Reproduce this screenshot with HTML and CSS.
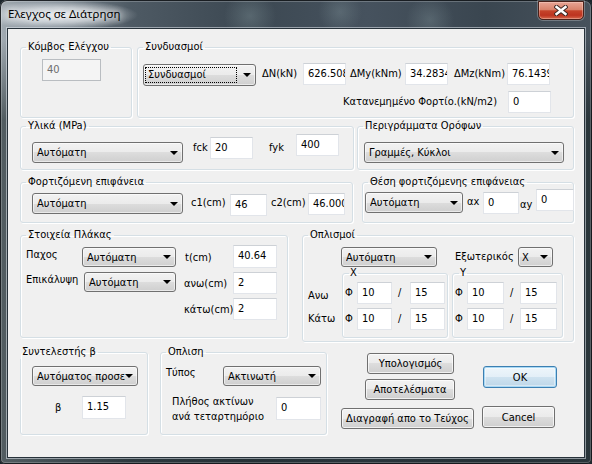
FILE: index.html
```html
<!DOCTYPE html>
<html lang="el">
<head>
<meta charset="utf-8">
<title>Ελεγχος σε Διάτρηση</title>
<link rel="stylesheet" href="styles.css">
</head>
<body>
<div class="window">
  <div class="titlebar">
    <span class="title">Ελεγχος σε Διάτρηση</span>
    <div class="close-btn">
      <svg width="14" height="11" viewBox="0 0 14 11">
        <path d="M2.5 2 L11.5 9 M11.5 2 L2.5 9" stroke="#3b2723" stroke-width="4.4" stroke-linecap="square" fill="none"/>
        <path d="M2.5 2 L11.5 9 M11.5 2 L2.5 9" stroke="#ffffff" stroke-width="2.4" stroke-linecap="square" fill="none"/>
      </svg>
    </div>
  </div>
  <div class="client">
    <div class="row r1">
      <fieldset class="grp g-node">
        <legend>Κόμβος Ελέγχου</legend>
        <div class="edit disabled node-edit">40</div>
      </fieldset>
      <fieldset class="grp g-comb">
        <legend>Συνδυασμοί</legend>
        <div class="line comb-a">
          <div class="combo comb-sel"><span class="focus-rect">Συνδυασμοί</span><i class="arrow"></i></div>
          <span class="lbl lh22 l-dn">ΔN(kN)</span>
          <div class="edit w43">626.508</div>
          <span class="lbl lh22 l-dmy">ΔMy(kNm)</span>
          <div class="edit w43">34.2834</div>
          <span class="lbl lh22 l-dmz">ΔMz(kNm)</span>
          <div class="edit w43">76.1439</div>
        </div>
        <div class="line comb-b">
          <span class="lbl lh22 l-load">Κατανεμημένο Φορτίο.(kN/m2)</span>
          <div class="edit w43">0</div>
        </div>
      </fieldset>
    </div>

    <div class="row r2">
      <fieldset class="grp g-mat">
        <legend>Υλικά (MPa)</legend>
        <div class="line mat-line">
          <div class="combo mat-sel"><span class="ctext">Αυτόματη</span><i class="arrow"></i></div>
          <span class="lbl l-fck">fck</span>
          <div class="edit w43">20</div>
          <span class="lbl l-fyk">fyk</span>
          <div class="edit w43 fyk-edit">400</div>
        </div>
      </fieldset>
      <fieldset class="grp g-outl">
        <legend>Περιγράμματα Ορόφων</legend>
        <div class="combo outl-sel"><span class="ctext">Γραμμές, Κύκλοι</span><i class="arrow"></i></div>
      </fieldset>
    </div>

    <div class="row r3">
      <fieldset class="grp g-load">
        <legend>Φορτιζόμενη επιφάνεια</legend>
        <div class="line load-line">
          <div class="combo mat-sel load-sel"><span class="ctext">Αυτόματη</span><i class="arrow"></i></div>
          <span class="lbl l-c1">c1(cm)</span>
          <div class="edit w37 c1-edit">46</div>
          <span class="lbl l-c2">c2(cm)</span>
          <div class="edit w37">46.000</div>
        </div>
      </fieldset>
      <fieldset class="grp g-pos">
        <legend>Θέση φορτιζόμενης επιφάνειας</legend>
        <div class="line pos-line">
          <div class="combo pos-sel"><span class="ctext">Αυτόματη</span><i class="arrow"></i></div>
          <span class="lbl l-ax">αx</span>
          <div class="edit ax-edit">0</div>
          <span class="lbl l-ay">αy</span>
          <div class="edit ay-edit">0</div>
        </div>
      </fieldset>
    </div>

    <div class="row r4">
      <fieldset class="grp g-slab">
        <legend>Στοιχεία Πλάκας</legend>
        <div class="line slab-1">
          <span class="lbl l-pax">Παχος</span>
          <div class="combo slab-sel1"><span class="ctext">Αυτόματη</span><i class="arrow"></i></div>
          <span class="lbl l-t">t(cm)</span>
          <div class="edit w44 h23">40.64</div>
        </div>
        <div class="line slab-2">
          <span class="lbl l-epi">Επικάλυψη</span>
          <div class="combo slab-sel2"><span class="ctext">Αυτόματη</span><i class="arrow"></i></div>
          <span class="lbl l-anw">ανω(cm)</span>
          <div class="edit w44 anw-edit">2</div>
        </div>
        <div class="line slab-3">
          <span class="spacer"></span>
          <span class="lbl l-katw">κάτω(cm)</span>
          <div class="edit w44">2</div>
        </div>
      </fieldset>
      <fieldset class="grp g-reb">
        <legend>Οπλισμοί</legend>
        <div class="line reb-a">
          <div class="combo reb-sel"><span class="ctext">Αυτόματη</span><i class="arrow"></i></div>
          <span class="lbl l-ext">Εξωτερικός</span>
          <div class="combo x-sel"><span class="ctext">X</span><i class="arrow"></i></div>
        </div>
        <div class="line reb-b">
          <div class="side-labels">
            <span class="lbl l-up">Ανω</span>
            <span class="lbl l-down">Κάτω</span>
          </div>
          <fieldset class="grp sub sub-x">
            <legend>X</legend>
            <div class="line sub-line first">
              <span class="lbl phi">Φ</span>
              <div class="edit w35">10</div>
              <span class="lbl slash">/</span>
              <div class="edit w35">15</div>
            </div>
            <div class="line sub-line">
              <span class="lbl phi">Φ</span>
              <div class="edit w35">10</div>
              <span class="lbl slash">/</span>
              <div class="edit w35">15</div>
            </div>
          </fieldset>
          <fieldset class="grp sub sub-y">
            <legend>Y</legend>
            <div class="line sub-line first">
              <span class="lbl phi">Φ</span>
              <div class="edit w37">10</div>
              <span class="lbl slash slash-y">/</span>
              <div class="edit w37">15</div>
            </div>
            <div class="line sub-line">
              <span class="lbl phi">Φ</span>
              <div class="edit w37">10</div>
              <span class="lbl slash slash-y">/</span>
              <div class="edit w37">15</div>
            </div>
          </fieldset>
        </div>
      </fieldset>
    </div>

    <div class="row r5">
      <fieldset class="grp g-beta">
        <legend>Συντελεστής β</legend>
        <div class="combo beta-sel"><span class="ctext">Αυτόματος προσε</span><i class="arrow"></i></div>
        <div class="line beta-line">
          <span class="lbl l-beta">β</span>
          <div class="edit w44 h23">1.15</div>
        </div>
      </fieldset>
      <fieldset class="grp g-opl">
        <legend>Οπλιση</legend>
        <div class="line opl-1">
          <span class="lbl l-type">Τύπος</span>
          <div class="combo opl-sel"><span class="ctext">Ακτινωτή</span><i class="arrow"></i></div>
        </div>
        <div class="line opl-2">
          <span class="lbl l-rays">Πλήθος ακτίνων<br>ανά τεταρτημόριο</span>
          <div class="edit w45 h23 rays-edit">0</div>
        </div>
      </fieldset>
      <div class="btn-col col1">
        <div class="btn b-calc">Υπολογισμός</div>
        <div class="btn b-res">Αποτελέσματα</div>
        <div class="btn b-del">Διαγραφή απο το Τεύχος</div>
      </div>
      <div class="btn-col col2">
        <div class="btn default b-ok">OK</div>
        <div class="btn b-cancel">Cancel</div>
      </div>
    </div>
  </div>
</div>
</body>
</html>
```

FILE: styles.css
```css
* { box-sizing: border-box; }
html, body { margin: 0; padding: 0; }
body {
  width: 592px;
  height: 464px;
  overflow: hidden;
  background: #1c262c;
  font-family: "DejaVu Sans Condensed", "DejaVu Sans", sans-serif;
  font-size: 11px;
  color: #000;
}

/* ---------- window frame ---------- */
.window {
  width: 592px;
  height: 464px;
  display: flex;
  flex-direction: column;
  border-radius: 7px 7px 5px 5px;
  background:
    radial-gradient(ellipse 78px 15px at 60px 15px, rgba(242,245,248,0.92) 0%, rgba(242,245,248,0.6) 50%, rgba(242,245,248,0) 100%),
    radial-gradient(circle 26px at 250px 16px, rgba(140,160,165,0.35), rgba(140,160,165,0)),
    radial-gradient(circle 22px at 340px 12px, rgba(140,160,165,0.3), rgba(140,160,165,0)),
    radial-gradient(circle 24px at 430px 20px, rgba(140,160,165,0.3), rgba(140,160,165,0)),
    linear-gradient(180deg, rgba(0,0,0,0) 0px, rgba(0,0,0,0) 40px, rgba(18,30,32,0.55) 120px),
    linear-gradient(90deg, #a2abb2 0%, #7a8690 9%, #4e5a64 22%, #3c4852 42%, #46525e 62%, #3a4650 82%, #47525c 100%);
  box-shadow: inset 0 0 0 1px rgba(10,14,18,0.85), inset 0 0 0 2px rgba(255,255,255,0.22);
}
.titlebar {
  height: 28px;
  flex: none;
  display: flex;
  align-items: flex-start;
}
.title {
  margin: 6px 0 0 8px;
  font-family: "Noto Sans", "Open Sans", sans-serif;
  font-size: 11.5px;
  line-height: 16px;
  color: #000;
  text-shadow: 0 0 6px rgba(255,255,255,0.9), 0 0 10px rgba(255,255,255,0.8);
}
.close-btn {
  margin: 1px 8px 0 auto;
  width: 46px;
  height: 19px;
  border: 1px solid #4a211a;
  border-radius: 0 0 5px 5px;
  background: linear-gradient(180deg, #e8a595 0%, #d9826b 45%, #c5432a 52%, #bd3420 78%, #d5674b 100%);
  box-shadow: inset 0 0 0 1px rgba(255,230,220,0.35), 0 0 0 1px rgba(255,255,255,0.25);
  display: flex;
  align-items: center;
  justify-content: center;
}
.close-btn svg { display: block; }

.client {
  flex: 1;
  margin: 0 7px 6px 7px;
  border: 1px solid #27323a;
  box-shadow: 0 0 0 1px rgba(225,232,238,0.55);
  background: #f0f0f0;
  padding: 11px 0 0 12px;
}

/* ---------- generic pieces ---------- */
.row { display: flex; align-items: flex-start; }
.line { display: flex; align-items: flex-start; }
.line > *, .row > * { flex-shrink: 0; }

.grp {
  margin: 0;
  padding: 0;
  min-width: 0;
  border: 1px solid #d5dfe5;
  border-radius: 3px;
  box-shadow: inset 1px 1px 0 #ffffff, 1px 1px 0 #ffffff;
}
.grp > legend {
  margin-left: 5px;
  padding: 0 2px;
  height: 14px;
  line-height: 14px;
}

.lbl { display: block; line-height: 14px; white-space: nowrap; }
.lh22 { line-height: 22px; }

.edit {
  height: 22px;
  background: #fff;
  border: 1px solid #e2e5ea;
  border-top-color: #cdd1d6;
  padding: 3px 0 0 4px;
  line-height: 13px;
  white-space: nowrap;
  overflow: hidden;
}
.edit.disabled {
  background: #f4f4f4;
  border-color: #b9bdc1;
  color: #6d6d6d;
}
.h23 { height: 23px; }
.w35 { width: 35px; }
.w37 { width: 37px; }
.w43 { width: 43px; }
.w44 { width: 44px; }
.w45 { width: 45px; }

.combo {
  height: 20px;
  display: flex;
  align-items: center;
  border: 1px solid #707070;
  border-radius: 3px;
  background: linear-gradient(180deg, #f2f2f2 0%, #ebebeb 50%, #dddddd 50%, #cfcfcf 100%);
  box-shadow: inset 0 0 0 1px rgba(255,255,255,0.55);
  padding-left: 4px;
  overflow: hidden;
  white-space: nowrap;
}
.combo .ctext { overflow: hidden; }
.combo .arrow {
  margin-left: auto;
  margin-right: 4px;
  flex: none;
  width: 0;
  height: 0;
  border-left: 4px solid transparent;
  border-right: 4px solid transparent;
  border-top: 4px solid #000;
}
.focus-rect {
  height: 16px;
  width: 92px;
  margin-left: -3px;
  padding-left: 2px;
  line-height: 14px;
  border: 1px dotted #000;
}

.btn {
  height: 21px;
  display: flex;
  align-items: center;
  justify-content: center;
  border: 1px solid #707070;
  border-radius: 3px;
  background: linear-gradient(180deg, #f2f2f2 0%, #ebebeb 50%, #dddddd 50%, #cfcfcf 100%);
  box-shadow: inset 0 0 0 1px rgba(255,255,255,0.7);
  white-space: nowrap;
}
.btn.default {
  border-color: #3c7fb1;
  background: linear-gradient(180deg, #eef6fb 0%, #e3eff7 50%, #cfe3f0 50%, #bdd6e8 100%);
  box-shadow: inset 0 0 0 1px #a9d9f5, inset 0 0 0 2px rgba(255,255,255,0.4);
}

/* ---------- row 1 ---------- */
.g-node { width: 112px; height: 78px; }
.node-edit { width: 59px; margin: 5px 0 0 21px; }
.g-comb { width: 437px; height: 78px; margin-left: 5px; }
.comb-a { margin-top: 9px; }
.comb-sel { width: 113px; height: 22px; margin: 1px 0 0 5px; }
.l-dn { width: 47px; padding-left: 6px; }
.l-dmy { width: 59px; padding-left: 4px; }
.l-dmz { width: 59px; padding-left: 6px; }
.comb-b { margin-top: 5px; justify-content: flex-end; padding-right: 22px; }
.l-load { margin-right: 11px; }

/* ---------- row 2 ---------- */
.r2 { margin-top: 1px; }
.g-mat { width: 334px; height: 51px; }
.mat-line { margin-top: 4px; }
.mat-sel { width: 151px; height: 21px; margin: 5px 0 0 11px; }
.l-fck { width: 27px; padding-left: 10px; margin-top: 4px; }
.l-fyk { width: 43px; padding-left: 16px; margin-top: 4px; }
.fyk-edit { margin-top: -3px; }
.g-outl { width: 217px; height: 51px; margin-left: 3px; }
.outl-sel { width: 200px; height: 21px; margin: 9px 0 0 6px; }

/* ---------- row 3 ---------- */
.r3 { margin-top: 5px; }
.g-load { width: 333px; height: 48px; }
.load-line { margin-top: 4px; }
.load-sel { margin-top: 0; }
.l-c1 { width: 47px; padding-left: 8px; margin-top: 3px; }
.c1-edit { margin-top: 1px; }
.l-c2 { width: 41px; padding-left: 4px; margin-top: 3px; }
.g-pos { width: 212px; height: 48px; margin-left: 9px; }
.pos-sel { width: 98px; height: 21px; margin: 3px 0 0 2px; }
.l-ax { width: 20px; padding-left: 4px; margin-top: 6px; }
.ax-edit { width: 36px; margin-top: 3px; }
.l-ay { width: 17px; padding-left: 1px; margin-top: 9px; }
.ay-edit { width: 38px; }

/* ---------- row 4 ---------- */
.r4 { margin-top: 5px; }
.g-slab { width: 268px; height: 110px; }
.slab-1 { margin-top: 3px; }
.l-pax { width: 61px; padding-left: 5px; margin-top: 3px; }
.slab-sel1 { width: 94px; margin-top: 2px; }
.l-t { width: 57px; padding-left: 9px; margin-top: 6px; }
.slab-2 { margin-top: 3px; }
.l-epi { width: 63px; padding-left: 5px; margin-top: 2px; }
.slab-sel2 { width: 92px; margin-top: 1px; }
.l-anw { width: 57px; padding-left: 8px; margin-top: 6px; }
.anw-edit { margin-top: 1px; }
.slab-3 { margin-top: 4px; }
.spacer { display: block; width: 155px; }
.l-katw { width: 57px; padding-left: 8px; margin-top: 5px; }

.g-reb { width: 272px; height: 114px; margin-left: 14px; }
.reb-a { margin-top: 5px; }
.reb-sel { width: 96px; margin-left: 38px; }
.l-ext { width: 81px; padding-left: 18px; margin-top: 3px; }
.x-sel { width: 35px; padding-left: 3px; }
.side-labels { width: 39px; padding-left: 5px; }
.l-up { margin-top: 22px; }
.l-down { margin-top: 9px; }
.sub { height: 71px; }
.sub > legend { height: 12px; line-height: 12px; margin-left: 6px; padding: 0 1px; }
.sub-x { width: 106px; }
.sub-y { width: 111px; margin-left: 4px; }
.sub-line { margin-top: 4px; }
.sub-line.first { margin-top: 3px; }
.phi { width: 14px; padding-left: 2px; line-height: 22px; }
.slash { width: 18px; padding-left: 6px; line-height: 22px; }
.slash-y { width: 16px; }

/* ---------- row 5 ---------- */
.r5 { margin-top: 3px; }
.g-beta { width: 128px; height: 90px; }
.g-beta > legend { margin-left: -1px; }
.beta-sel { width: 106px; margin: 7px 0 0 11px; }
.beta-line { margin-top: 10px; }
.l-beta { width: 61px; padding-left: 34px; line-height: 23px; }
.g-opl { width: 167px; height: 90px; margin-left: 12px; }
.opl-1 { margin-top: 7px; }
.l-type { width: 62px; padding-left: 5px; }
.opl-sel { width: 98px; }
.opl-2 { margin-top: 8px; }
.l-rays { width: 115px; padding-left: 11px; line-height: 15px; }
.rays-edit { margin-top: 3px; }

.btn-col { display: flex; flex-direction: column; align-items: flex-start; }
.col1 { width: 133px; margin-left: 14px; padding-top: 8px; }
.b-calc { width: 87px; margin-left: 26px; }
.b-res { width: 90px; margin-left: 24px; margin-top: 5px; }
.b-del { width: 133px; margin-top: 8px; }
.col2 { width: 75px; margin-left: 8px; }
.b-ok { width: 74px; height: 22px; margin: 21px 0 0 1px; }
.b-cancel { width: 73px; height: 22px; margin-top: 18px; }
```
